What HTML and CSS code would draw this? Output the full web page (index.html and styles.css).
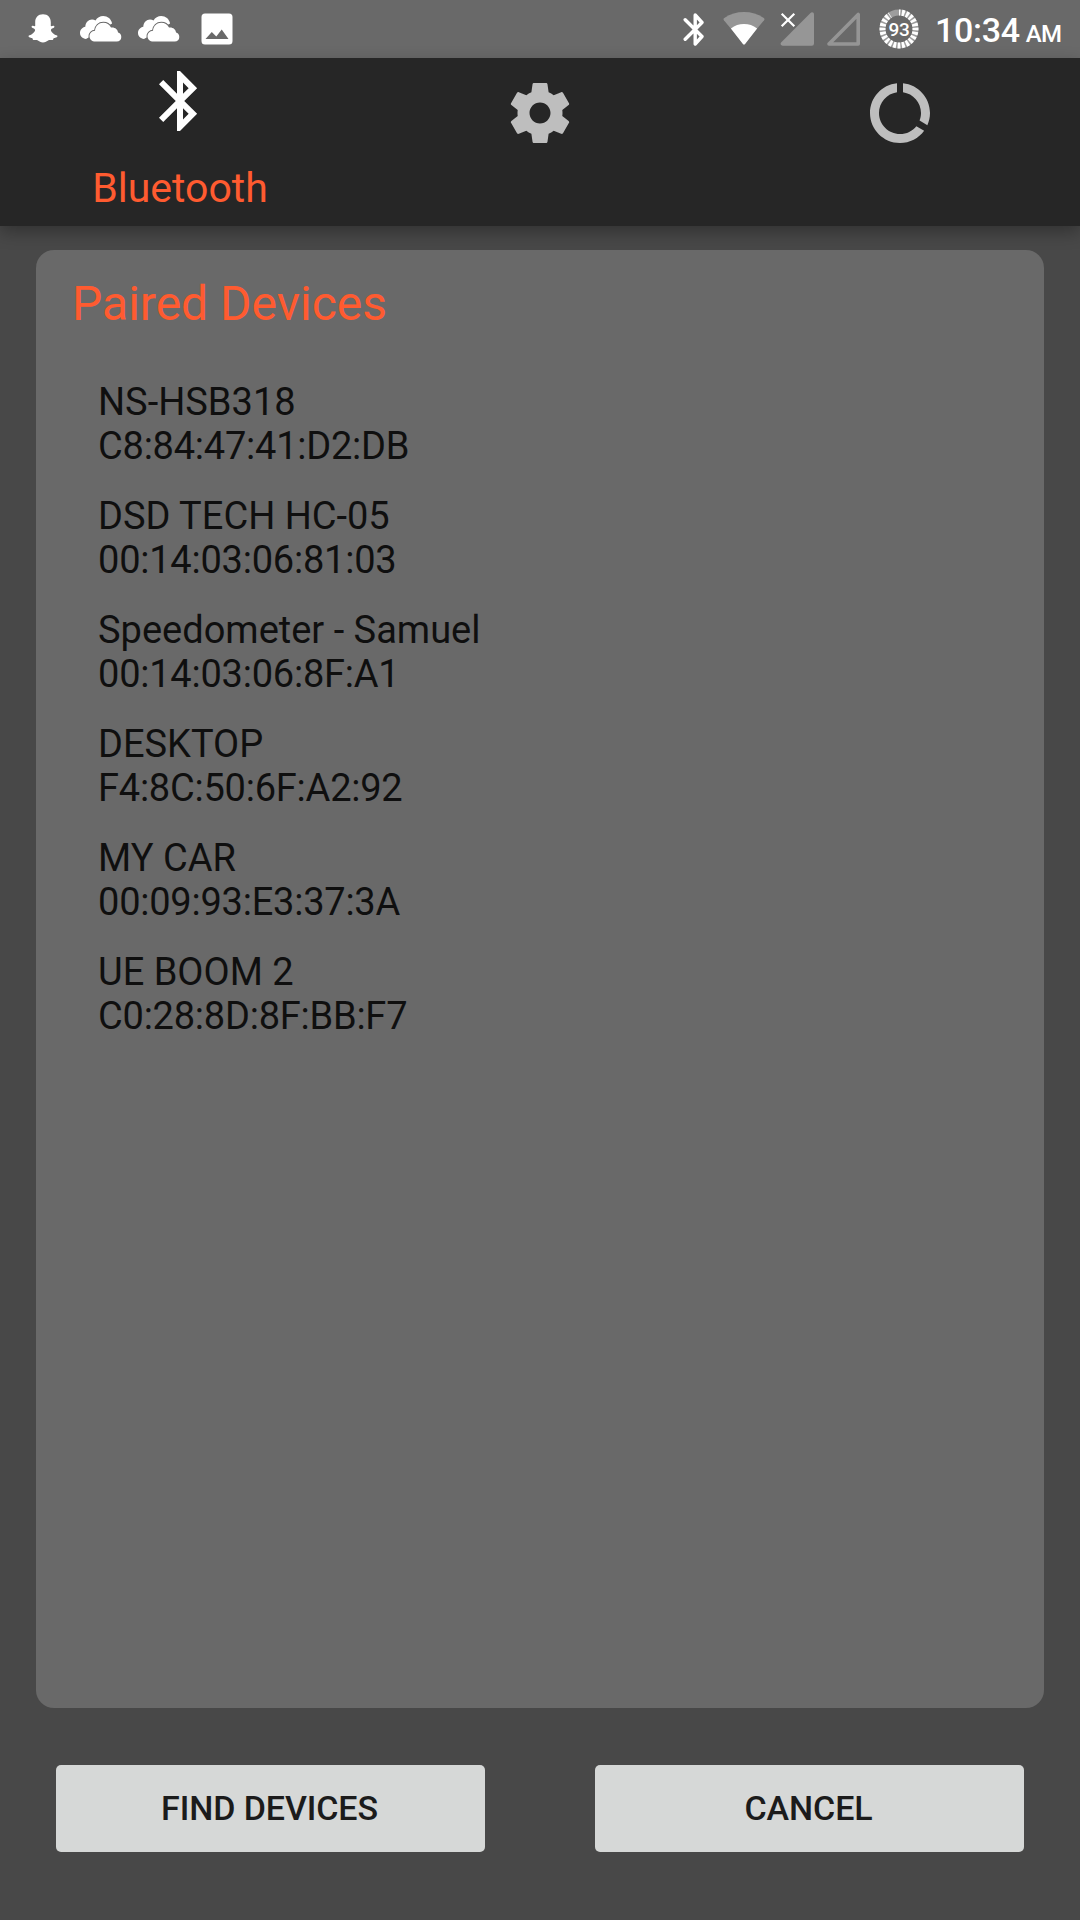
FILE: index.html
```html
<!DOCTYPE html>
<html lang="en">
<head>
<meta charset="utf-8">
<title>Bluetooth</title>
<link rel="stylesheet" href="styles.css">
</head>
<body>
<div class="screen">
  <header class="status">
    <div class="notifications">
      <svg class="ghost" width="30" height="29" viewBox="0 0 30 29"><path fill="#fff" d="M15 .3c5 0 7.800 3.300 7.800 8v3.800c.9.300 2-.7 3.200-.2.800.4.600 1.300-.2 1.800-1 .6-2.900 1-2.900 2.200 0 1.700 3 4.800 5.600 5.300.8.200 1.100.6.900 1.200-.4 1-2.300 1.300-3.600 1.700-.5.400-.3 1.500-1.100 1.800-1.300.3-2.700-.4-4.200.3C18.800 27.100 17.300 28.400 15 28.400s-3.800-1.300-5.500-2.200c-1.500-.7-2.900 0-4.200-.3-.8-.3-.6-1.400-1.100-1.800C2.900 23.700 1 23.400.6 22.400c-.2-.6.100-1 .9-1.200 2.600-.5 5.600-3.600 5.600-5.300 0-1.200-1.900-1.600-2.900-2.200-.8-.5-1-1.400-.2-1.800 1.200-.5 2.300.5 3.200.2V8.300c0-4.700 2.800-8 7.800-8z"/></svg>
      <svg class="cloud" width="42" height="26" viewBox="0 0 42 26"><g fill="#fff"><path d="M6 23C2.500 22.600 0 20.300 0 17c0-3 2.200-5.600 5.300-6.200C5.500 6.500 8.500 3.600 12 3.600c1.400 0 2.500.3 3.500.9C17.200 1.700 20 0 23.200 0c4.400 0 8 2.900 8.900 7.500"/><path stroke="#696969" stroke-width="2" paint-order="stroke" d="M15.500 25.500c-3.700 0-6-2.300-6-5.300 0-3 2.300-5.300 5.500-5.500.4-4.800 3.800-7.900 8.300-7.900 3.500 0 6.200 1.700 7.700 4.800 4-.5 6.800 1.900 7 5 2 .4 3.300 2 3.300 4.300 0 2.800-1.800 4.600-4.600 4.600z"/></g></svg>
      <svg class="cloud" width="42" height="26" viewBox="0 0 42 26"><g fill="#fff"><path d="M6 23C2.500 22.600 0 20.300 0 17c0-3 2.200-5.600 5.300-6.200C5.500 6.500 8.500 3.600 12 3.600c1.400 0 2.500.3 3.500.9C17.200 1.700 20 0 23.200 0c4.400 0 8 2.900 8.900 7.500"/><path stroke="#696969" stroke-width="2" paint-order="stroke" d="M15.500 25.500c-3.700 0-6-2.300-6-5.300 0-3 2.300-5.300 5.500-5.500.4-4.800 3.800-7.900 8.300-7.900 3.500 0 6.200 1.700 7.700 4.800 4-.5 6.800 1.900 7 5 2 .4 3.300 2 3.300 4.300 0 2.800-1.800 4.600-4.600 4.600z"/></g></svg>
      <svg class="photo" width="32" height="32" viewBox="0 0 32 32"><path fill="#fff" fill-rule="evenodd" d="M4 .5h24a3.500 3.500 0 0 1 3.500 3.500v24a3.500 3.500 0 0 1-3.500 3.500H4A3.500 3.500 0 0 1 .5 28V4A3.500 3.500 0 0 1 4 .5zM4.500 26h23L20.700 16.500l-5.400 7-4.500-4.500z"/></svg>
    </div>
    <div class="system">
      <svg width="22" height="34" viewBox="0 0 22 34"><path fill="none" stroke="#fff" stroke-width="3.400" stroke-linecap="round" stroke-linejoin="round" d="M2.200 7.700 19 24.500l-6.800 7.500V3L19 10.500 2.200 27.300"/></svg>
      <svg class="wifi" width="42" height="33" viewBox="0 0 42 33"><path fill="#fff" fill-opacity=".3" d="M21 32.500 .9 8.200C.2 7.300.5 6.500 1.300 5.900 7.200 1.900 13.800 0 21 0s13.800 1.900 19.700 5.900c.8.600 1.100 1.400.4 2.300z"/><path fill="#fff" d="m22.100 31.900 12-15.500c-4-2.900-8.200-4.400-13.100-4.400s-9.100 1.500-13.100 4.400l12 15.500c.7.900 1.500.9 2.200 0z"/></svg>
      <svg class="signal" width="34" height="34" viewBox="0 0 34 34"><path fill="#fff" fill-opacity=".3" d="M34 2.500V31.500a2.200 2.200 0 0 1-2.200 2.200H2.800c-2 0-3-2-1.500-3.500L30.500 1C32 -.4 34 .5 34 2.500z"/><path stroke="#fff" stroke-width="2.200" d="m1.700 1.700 12.600 12.600m0-12.600L1.700 14.300"/></svg>
      <svg class="signal-empty" width="34" height="34" viewBox="0 0 34 34"><path fill="none" stroke="#959595" stroke-width="3.600" stroke-linejoin="round" d="M31.200 2.500V32H2z"/></svg>
      <svg class="battery" width="40" height="40" viewBox="0 0 40 40"><circle cx="20" cy="20" r="16.500" fill="none" stroke="#fff" stroke-opacity=".35" stroke-width="6"/><circle cx="20" cy="20" r="16.500" fill="none" stroke="#fff" stroke-width="6" pathLength="100" stroke-dasharray="2.700 1.467" stroke-dashoffset="1.350" transform="rotate(-90 20 20)" mask="url(#charged)"/><mask id="charged" maskUnits="userSpaceOnUse" x="0" y="0" width="40" height="40"><circle cx="20" cy="20" r="16.500" fill="none" stroke="#fff" stroke-width="8" pathLength="100" stroke-dasharray="91 9"/></mask><text class="battery-level" x="20" y="27" text-anchor="middle">93</text></svg>
      <div class="clock">10:34<span class="meridiem">AM</span></div>
    </div>
  </header>
  <nav class="tabs">
    <div class="tab tab-active">
      <svg width="72" height="72" viewBox="0 0 24 24"><path fill="#fff" d="M17.710 7.710L12 2h-1v7.590L6.410 5 5 6.410 10.590 12 5 17.590 6.410 19 11 14.410V22h1l5.710-5.710-4.300-4.290 4.300-4.290zM13 5.830l1.880 1.880L13 9.590V5.830zm1.880 10.460L13 18.170v-3.760l1.880 1.880z"/></svg>
      <span class="tab-label">Bluetooth</span>
    </div>
    <div class="tab">
      <svg width="72" height="72" viewBox="0 0 24 24"><path fill="#bebebe" d="M19.430 12.980c.04-.32.07-.64.07-.98s-.03-.66-.07-.98l2.110-1.650c.19-.15.240-.42.120-.64l-2-3.460c-.12-.22-.39-.3-.61-.22l-2.490 1c-.52-.4-1.080-.73-1.690-.98l-.38-2.650C14.460 2.180 14.250 2 14 2h-4c-.25 0-.46.180-.49.420l-.38 2.650c-.61.250-1.170.590-1.690.980l-2.490-1c-.23-.09-.49 0-.61.220l-2 3.460c-.13.220-.07.490.12.640l2.110 1.650c-.04.320-.07.650-.07.980s.03.660.07.980l-2.110 1.650c-.19.150-.24.420-.12.640l2 3.460c.12.220.39.300.61.220l2.490-1c.52.400 1.080.730 1.690.980l.38 2.650c.03.240.24.420.49.420h4c.25 0 .46-.18.490-.42l.38-2.650c.61-.25 1.170-.59 1.690-.98l2.490 1c.23.090.49 0 .61-.22l2-3.460c.12-.22.070-.49-.12-.64l-2.110-1.650zM12 15.500c-1.930 0-3.500-1.570-3.500-3.500s1.570-3.500 3.500-3.500 3.500 1.570 3.500 3.500-1.570 3.500-3.500 3.500z"/></svg>
    </div>
    <div class="tab">
      <svg width="72" height="72" viewBox="0 0 24 24"><path fill="#bebebe" d="M13 2.050v3.030c3.390.49 6 3.390 6 6.920 0 .9-.18 1.750-.48 2.540l2.600 1.530c.56-1.240.88-2.620.88-4.070 0-5.180-3.950-9.450-9-9.950zM12 19c-3.870 0-7-3.130-7-7 0-3.530 2.610-6.430 6-6.920V2.050c-5.060.5-9 4.760-9 9.950 0 5.520 4.470 10 9.990 10 3.310 0 6.240-1.610 8.060-4.090l-2.600-1.530C16.170 17.980 14.210 19 12 19z"/></svg>
    </div>
  </nav>
  <main class="content">
    <section class="card">
      <h1 class="card-title">Paired Devices</h1>
      <ul class="devices">
        <li class="device">NS-HSB318<span class="address">C8:84:47:41:D2:DB</span></li>
        <li class="device">DSD TECH HC-05<span class="address">00:14:03:06:81:03</span></li>
        <li class="device">Speedometer - Samuel<span class="address">00:14:03:06:8F:A1</span></li>
        <li class="device">DESKTOP<span class="address">F4:8C:50:6F:A2:92</span></li>
        <li class="device">MY CAR<span class="address">00:09:93:E3:37:3A</span></li>
        <li class="device">UE BOOM 2<span class="address">C0:28:8D:8F:BB:F7</span></li>
      </ul>
    </section>
    <div class="actions">
      <button class="action">FIND DEVICES</button>
      <button class="action">CANCEL</button>
    </div>
  </main>
</div>
</body>
</html>
```
FILE: styles.css
```css
* {
  box-sizing: border-box;
}

body {
  margin: 0;
  background: #484848;
  font-family: Roboto, sans-serif;
}

svg {
  display: block;
  flex: none;
}

.screen {
  display: flex;
  flex-direction: column;
  width: 1080px;
  height: 1920px;
  overflow: hidden;
  background: #484848;
}

.status {
  display: flex;
  justify-content: space-between;
  height: 58px;
  padding: 0 18px 0 28px;
  background: #696969;
  color: #fff;
}

.notifications,
.system {
  display: flex;
  align-items: flex-start;
}

.ghost {
  margin-top: 14px;
}

.cloud {
  margin: 16px 0 0 22px;
}

.cloud + .cloud {
  margin-left: 16px;
}

.photo {
  margin: 13px 0 0 21px;
}

.system {
  width: 379px;
  padding-top: 12px;
}

.wifi {
  margin-left: 18px;
}

.signal {
  margin-left: 15px;
}

.signal-empty {
  margin-left: 13px;
}

.battery {
  margin: -3px 0 0 18px;
}

.battery-level {
  fill: #fff;
  font-size: 19px;
  font-weight: 500;
  letter-spacing: -0.3px;
}

.clock {
  margin: -2px 0 0 16px;
  font-size: 34px;
  font-weight: 500;
  letter-spacing: -0.3px;
  line-height: 40px;
  white-space: nowrap;
}

.meridiem {
  margin-left: 6px;
  font-size: 24px;
  letter-spacing: -0.7px;
}

.tabs {
  position: relative;
  display: grid;
  grid-template-columns: repeat(3, 1fr);
  height: 168px;
  background: #262626;
  box-shadow: 0 6px 16px rgba(0, 0, 0, 0.3);
}

.tab {
  display: flex;
  flex-direction: column;
  align-items: center;
  padding-top: 19px;
}

.tab-active {
  padding-top: 7px;
}

.tab-label {
  margin-top: 26px;
  color: #ff5b30;
  font-size: 41px;
  line-height: 50px;
}

.content {
  flex: 1;
  display: flex;
  flex-direction: column;
  padding: 24px 36px 68px;
}

.card {
  position: relative;
  flex: 1;
  padding: 25px 36px;
  border-radius: 18px;
  background: #696969;
}

.card-title {
  margin: 0;
  color: #ff5b30;
  font-size: 48px;
  font-weight: 400;
  line-height: 58px;
}

.devices {
  display: flex;
  flex-direction: column;
  gap: 26px;
  margin: 47px 0 0;
  padding: 0 0 0 26px;
  list-style: none;
}

.device {
  color: #0f0f0f;
  font-size: 38px;
  line-height: 44px;
}

.address {
  display: block;
  letter-spacing: -0.23px;
}

.actions {
  display: grid;
  grid-template-columns: 1fr 1fr;
  gap: 110px;
  padding: 57px 20px 0;
}

.action {
  height: 87px;
  padding: 0 2px 1px 0;
  border: 0;
  border-radius: 5px;
  background: #d6d8d7;
  color: #1b1b1b;
  font: 500 34px/40px Roboto, sans-serif;
  letter-spacing: -0.1px;
}
```
